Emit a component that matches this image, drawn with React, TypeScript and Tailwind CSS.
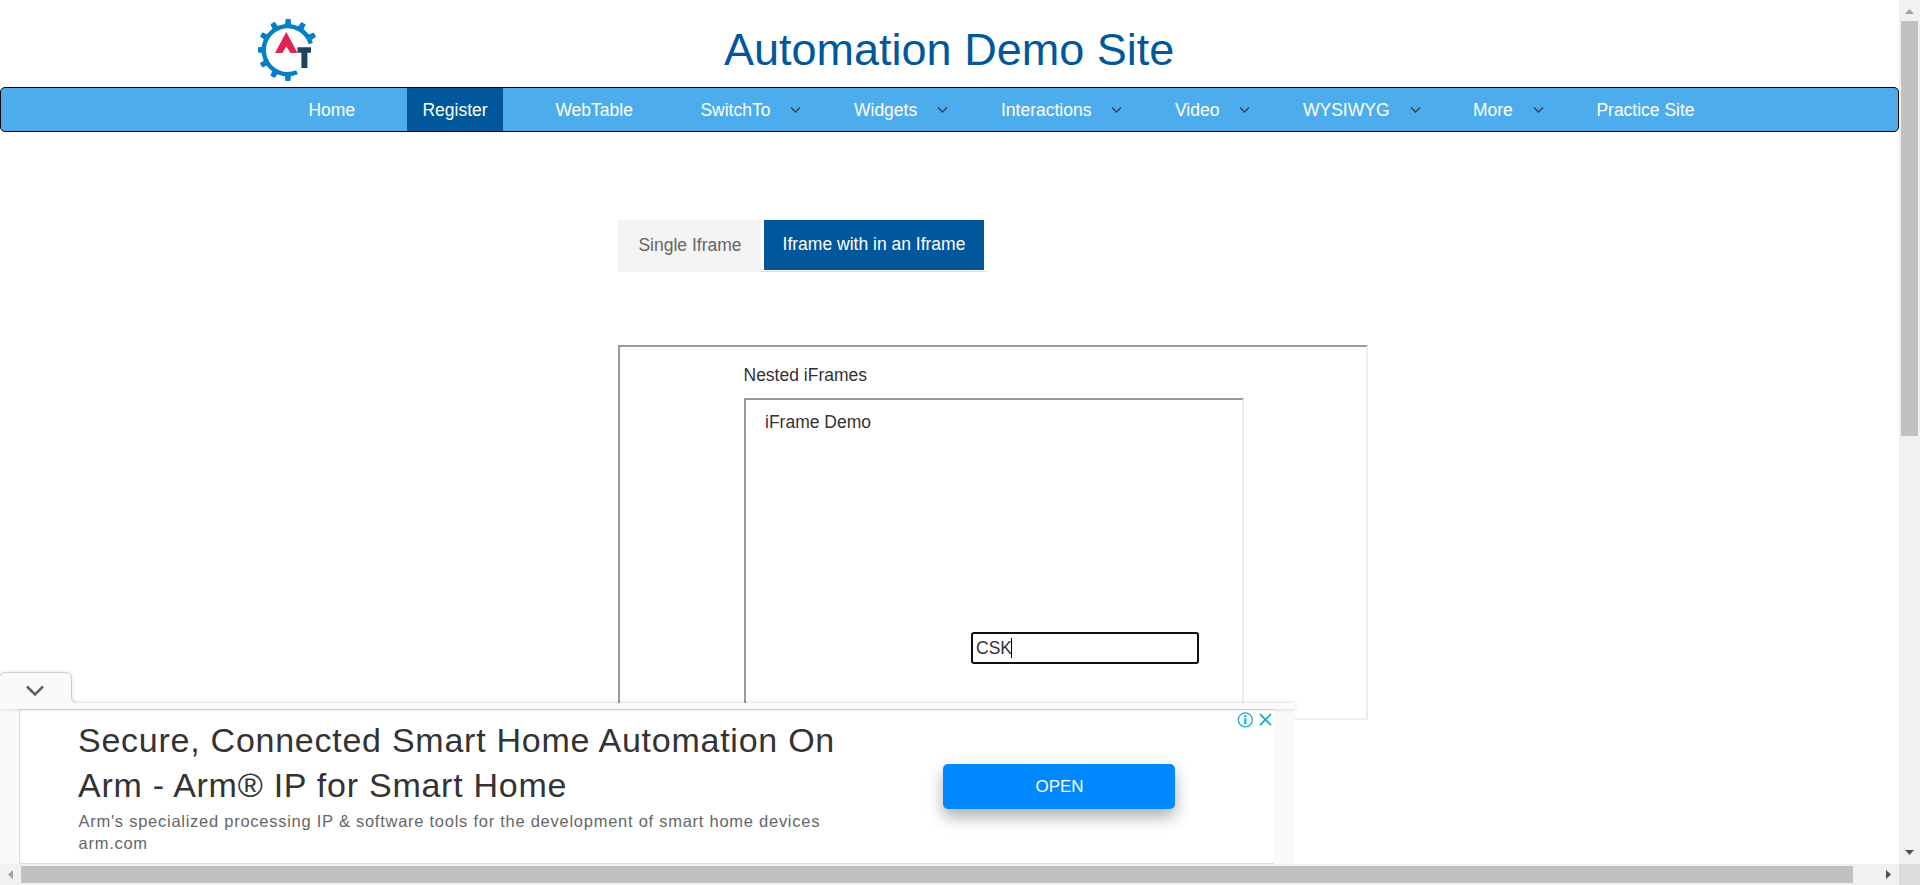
import React from "react";

type NavItem = { label: string; cell: string; menu?: boolean; active?: boolean };

const NAV: NavItem[] = [
  { label: "Home", cell: "w-[114px]" },
  { label: "Register", cell: "w-[133px]", active: true },
  { label: "WebTable", cell: "w-[145px]" },
  { label: "SwitchTo", cell: "w-[153.6px]", menu: true },
  { label: "Widgets", cell: "w-[147px]", menu: true },
  { label: "Interactions", cell: "w-[174px]", menu: true },
  { label: "Video", cell: "w-[128px]", menu: true },
  { label: "WYSIWYG", cell: "w-[170px]", menu: true },
  { label: "More", cell: "w-[123.4px]", menu: true },
  { label: "Practice Site", cell: "w-[120px]" },
];

function Logo() {
  const teeth = [0, 30, 60, 180, 210, 240, 270, 300, 330];
  return (
    <svg className="ml-[258px] mt-[19px] h-[62px] w-[60px] shrink-0" viewBox="0 0 60 62">
      <path d="M52.8 24.6A24 24 0 1 0 39 53.3" fill="none" stroke="#047fc8" strokeWidth="4.4" />
      {teeth.map((a) => (
        <path key={a} d="M26.7 8L27.6 0h5L33.3 8z" fill="#047fc8" transform={`rotate(${a} 30 31)`} />
      ))}
      <path d="M17 34L28.3 13 39.5 34h-7L28.3 27.5 24.3 34z" fill="#e02350" />
      <path d="M39.5 28.2H53v5.6h-3.6V49h-6V33.8h-3.9z" fill="#20435c" />
    </svg>
  );
}

function Header() {
  return (
    <header className="flex h-[87px]">
      <Logo />
      <h1 className="ml-[406px] mt-[18px] whitespace-nowrap text-[45px] leading-[63px] text-[#00579c]">
        Automation Demo Site
      </h1>
    </header>
  );
}

function Nav() {
  return (
    <nav className="flex h-[45px] rounded-[5px] border border-black bg-[#4dadec] pl-[307px] text-[17.5px] text-white">
      {NAV.map((n) => (
        <div key={n.label} className={`flex shrink-0 items-center whitespace-nowrap ${n.cell}`}>
          {n.active ? (
            <span className="-ml-[15px] flex h-full w-24 items-center justify-center bg-[#00579c] pt-[2px]">{n.label}</span>
          ) : (
            <span className="pl-[0.4px] pt-[2px]">{n.label}</span>
          )}
          {n.menu && (
            <svg className="ml-5 h-[6px] w-[11px]" viewBox="0 0 11 6">
              <path d="M1 .5L5.5 5 10 .5" fill="none" stroke="#2b4354" strokeWidth="1.3" />
            </svg>
          )}
        </div>
      ))}
    </nav>
  );
}

function Tabs() {
  return (
    <div className="ml-[618px] mt-[88px] flex h-[52px] text-[17.5px] leading-[25px]">
      <div className="w-[143px] bg-[#f4f4f4] pl-px pt-[13px] text-center text-[#666]">Single Iframe</div>
      <div className="w-[226px] border-b border-[#ddd] pl-[3px]">
        <div className="h-[50px] w-[220px] bg-[#00579c] pt-3 text-center text-white">Iframe with in an Iframe</div>
      </div>
    </div>
  );
}

function Frames() {
  return (
    <div className="ml-[618px] mt-[73px] h-[375px] w-[750px] overflow-hidden border-2 border-b-[#eee] border-l-[#9a9a9a] border-r-[#eee] border-t-[#9a9a9a] pl-[124px] text-[17.5px] leading-[25px] text-[#333]">
      <div className="-ml-[0.5px] mt-4">Nested iFrames</div>
      <div className="mt-[10px] h-[350px] w-[500px] border-2 border-b-[#eee] border-l-[#9a9a9a] border-r-[#eee] border-t-[#9a9a9a]">
        <div className="ml-[19px] mt-[10px]">iFrame Demo</div>
        <div className="ml-[225px] mt-[197px] flex h-8 w-[228px] items-center rounded-[3px] border-2 border-[#101010] pl-[3px]">
          <span>CSK</span>
          <span className="-ml-px h-5 w-px bg-black" />
        </div>
      </div>
    </div>
  );
}

function Ad() {
  return (
    <div className="absolute left-0 top-[672px] w-[1295px]">
      <svg className="absolute left-0 top-0 z-10 h-[37px] w-[1295px] overflow-visible" viewBox="0 0 1295 37">
        <path
          d="M0 4Q1 1 5 1H65Q71 1 71 7V25Q71 31 77 31H1295V37H0z"
          fill="#fafafa"
          className="drop-shadow-[0_0_2px_rgba(0,0,0,0.18)]"
        />
        <path d="M0 4Q1 .5 5 .5H65Q71.500 .5 71.500 7V25Q71.500 30 76 30.500" fill="none" stroke="#cfcfcf" />
        <path d="M27 14.500L35 22.500 43 14.500" fill="none" stroke="#616161" strokeWidth="2.5" />
      </svg>
      <div className="relative mt-[37px] flex h-[155px] bg-[#fafafa] pl-[19px]">
        <div className="flex w-[1255px] border border-r-0 border-[#dcdcdc] bg-white">
          <div className="w-[800px] whitespace-nowrap pl-[58px] pt-[8px]">
            <div className="text-[34px] leading-[45px] tracking-[0.745px] text-[#333]">
              Secure, Connected Smart Home Automation On
              <br />
              Arm - Arm® IP for Smart Home
            </div>
            <div className="mt-[2px] pl-[0.5px] text-[16.5px] leading-[22px] tracking-[0.74px] text-[#666]">
              Arm's specialized processing IP &amp; software tools for the development of smart home devices
              <br />
              arm.com
            </div>
          </div>
          <div className="ml-[123px] mt-[54px] flex h-[45px] w-[232px] shrink-0 items-center justify-center rounded-[5px] bg-[#0088ff] pl-px text-[17px] text-white shadow-[0_8px_16px_rgba(20,25,50,0.35)]">
            OPEN
          </div>
          <svg className="ml-[62px] mt-[2px] h-4 w-[35px] shrink-0" viewBox="0 0 35 16" fill="none" stroke="#0cb4d2">
            <circle cx="8.300" cy="7.800" r="7" strokeWidth="1.3" />
            <path d="M8.300 6.300V12M8.300 3.200V5.200" strokeWidth="2.2" />
            <path d="M23 2.200L34 13.200M34 2.200L23 13.200" strokeWidth="1.9" />
          </svg>
        </div>
      </div>
    </div>
  );
}

export default function App() {
  return (
    <div className="relative flex h-[885px] w-[1920px] flex-col overflow-hidden bg-white font-['Liberation_Sans',Arial,sans-serif]">
      <div className="flex h-[864px]">
        <main className="w-[1899px] overflow-hidden">
          <Header />
          <Nav />
          <Tabs />
          <Frames />
          <Ad />
        </main>
        <div className="flex w-[21px] flex-col items-center bg-[#f1f1f1]">
          <svg className="h-[21px] w-[21px] shrink-0" viewBox="0 0 21 21">
            <path d="M6 14h9L10.500 9z" fill="#a3a3a3" />
          </svg>
          <div className="h-[415px] w-[17px] bg-[#c1c1c1]" />
          <svg className="mt-auto h-[21px] w-[21px] shrink-0" viewBox="0 0 21 21">
            <path d="M6 7h9L10.500 12z" fill="#505050" />
          </svg>
        </div>
      </div>
      <div className="relative flex h-[21px] items-center bg-[#f1f1f1]">
        <svg className="h-[21px] w-[21px] shrink-0" viewBox="0 0 21 21">
          <path d="M13 6v9L8 10.500z" fill="#a3a3a3" />
        </svg>
        <div className="h-[17px] w-[1832px] bg-[#c1c1c1]" />
        <svg className="ml-auto h-[21px] w-[21px] shrink-0" viewBox="0 0 21 21">
          <path d="M8 6v9L13 10.500z" fill="#505050" />
        </svg>
        <div className="h-full w-[21px] bg-[#dcdcdc]" />
      </div>
    </div>
  );
}
